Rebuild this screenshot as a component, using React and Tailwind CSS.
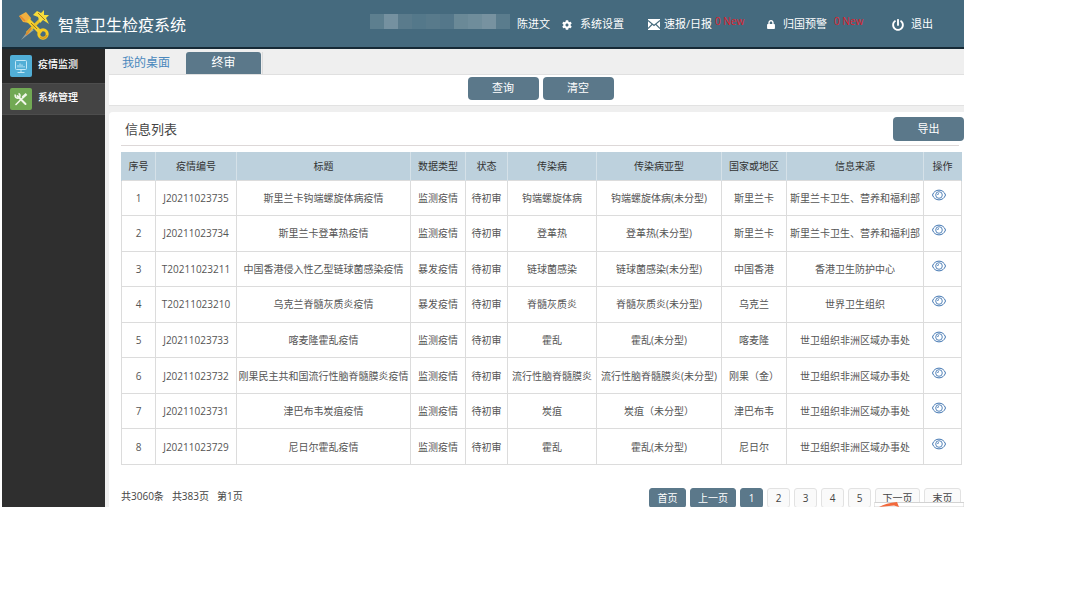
import { useState } from "react";
import { FaCog, FaLock, FaPowerOff } from "react-icons/fa";

const columns = [
  { title: "序号", width: "w-[34px]" },
  { title: "疫情编号", width: "w-[81px]" },
  { title: "标题", width: "w-[174px]" },
  { title: "数据类型", width: "w-[55px]" },
  { title: "状态", width: "w-[42px]" },
  { title: "传染病", width: "w-[89px]" },
  { title: "传染病亚型", width: "w-[125px]" },
  { title: "国家或地区", width: "w-[65px]" },
  { title: "信息来源", width: "w-[137px]" },
  { title: "操作", width: "w-[38px]" },
];

const rows = [
  ["J20211023735", "斯里兰卡钩端螺旋体病疫情", "监测疫情", "待初审", "钩端螺旋体病", "钩端螺旋体病(未分型)", "斯里兰卡", "斯里兰卡卫生、营养和福利部"],
  ["J20211023734", "斯里兰卡登革热疫情", "监测疫情", "待初审", "登革热", "登革热(未分型)", "斯里兰卡", "斯里兰卡卫生、营养和福利部"],
  ["T20211023211", "中国香港侵入性乙型链球菌感染疫情", "暴发疫情", "待初审", "链球菌感染", "链球菌感染(未分型)", "中国香港", "香港卫生防护中心"],
  ["T20211023210", "乌克兰脊髓灰质炎疫情", "暴发疫情", "待初审", "脊髓灰质炎", "脊髓灰质炎(未分型)", "乌克兰", "世界卫生组织"],
  ["J20211023733", "喀麦隆霍乱疫情", "监测疫情", "待初审", "霍乱", "霍乱(未分型)", "喀麦隆", "世卫组织非洲区域办事处"],
  ["J20211023732", "刚果民主共和国流行性脑脊髓膜炎疫情", "监测疫情", "待初审", "流行性脑脊髓膜炎", "流行性脑脊髓膜炎(未分型)", "刚果（金）", "世卫组织非洲区域办事处"],
  ["J20211023731", "津巴布韦炭疽疫情", "监测疫情", "待初审", "炭疽", "炭疽（未分型）", "津巴布韦", "世卫组织非洲区域办事处"],
  ["J20211023729", "尼日尔霍乱疫情", "监测疫情", "待初审", "霍乱", "霍乱(未分型)", "尼日尔", "世卫组织非洲区域办事处"],
];

const Logo = () => (
  <svg viewBox="0 0 34 34" className="w-[34px] h-[34px]" aria-hidden="true">
    <path d="M4 32 L13 20 L17 22 Z" fill="#93a3a3" />
    <path d="M2 8 L9 4 L14 10 L12 15 L6 14 Z" fill="#f0b040" />
    <path d="M3 8 L8 13" stroke="#e8862d" strokeWidth="1.5" />
    <path d="M11 12 L24 25" stroke="#f4cf2c" strokeWidth="4" />
    <path d="M10 25 L24 11" stroke="#e9c42a" strokeWidth="3" />
    <path d="M9 27 L14 20" stroke="#d98a35" strokeWidth="2" />
    <path
      d="M16 7 L20 3 L24 5 L27 2 L27 7 L32 7 L29 10 L32 16 L26 12 L23 15 L21 9 Z"
      fill="#f7dc3b"
    />
    <path d="M21 5 L28 12" stroke="#a8791a" strokeWidth="1" />
    <path d="M14 15 L20 21" stroke="#a8791a" strokeWidth="1" />
    <circle cx="26" cy="26" r="4.2" fill="none" stroke="#f5cc22" strokeWidth="3" />
    <path d="M23 29 A4.2 4.2 0 0 0 30 27" fill="none" stroke="#d99a1f" strokeWidth="1.4" />
  </svg>
);

const MailIcon = () => (
  <svg viewBox="0 0 12 11" className="w-3 h-[11px]" aria-hidden="true">
    <rect width="12" height="11" fill="#fff" />
    <path
      d="M0 1.5 L6 6.5 L12 1.5 M0 9.5 L4 5.5 M12 9.5 L8 5.5"
      fill="none"
      stroke="#456a7c"
      strokeWidth="1.1"
    />
  </svg>
);

const MonitorIcon = () => (
  <svg viewBox="0 0 22 22" className="w-[22px] h-[22px]" aria-hidden="true">
    <rect width="22" height="22" rx="2" fill="#51aed6" />
    <rect x="5.5" y="5.5" width="11" height="9" rx="1" fill="none" stroke="#c3e8f7" />
    <path d="M8 12.5V10M10 12.5V8.5M12 12.5V9.5M14 12.5V11" stroke="#c3e8f7" />
    <path d="M11 15V17M7.5 17.5H14.5" stroke="#c3e8f7" />
  </svg>
);

const ToolsIcon = () => (
  <svg viewBox="0 0 22 22" className="w-[22px] h-[22px]" aria-hidden="true">
    <rect width="22" height="22" rx="2" fill="#71a954" />
    <path d="M7.5 8 L15.5 16" stroke="#f1f7ea" strokeWidth="2" strokeLinecap="round" />
    <path d="M6 16.5 L13 9.5" stroke="#f1f7ea" strokeWidth="1.6" strokeLinecap="round" />
    <path
      d="M5.5 6.5 A2.4 2.4 0 1 0 8.5 5.5"
      fill="none"
      stroke="#f1f7ea"
      strokeWidth="1.6"
    />
    <path d="M12.5 9.5 L16.5 6" stroke="#f1f7ea" strokeWidth="2.4" />
  </svg>
);

const EyeIcon = () => (
  <svg
    viewBox="0 0 14 12"
    className="w-[14px] h-3"
    fill="none"
    stroke="#4377b2"
    aria-hidden="true"
  >
    <path d="M0.5 6 C2.5 -0.5 11.5 -0.5 13.5 6 C11.5 12.5 2.5 12.5 0.5 6 Z" />
    <circle cx="7" cy="6" r="3.3" strokeWidth="0.9" />
    <path d="M5.6 6 A1.4 1.4 0 0 1 7 4.6" strokeWidth="0.9" />
  </svg>
);

const mosaic = [
  "bg-[#5d7f8f]",
  "bg-[#7591a0]",
  "bg-[#5a7b8c]",
  "bg-[#54788a]",
  "bg-[#587a8b]",
  "bg-[#54778a]",
  "bg-[#6a8997]",
  "bg-[#6f8d9b]",
  "bg-[#7792a0]",
  "bg-[#5a7c8d]",
];

const Header = () => (
  <header className="flex items-center h-[49px] pt-[2px] pl-[15px] pr-[31px] bg-[#456a7e] border-b-2 border-[#162a36] text-white text-[11px] whitespace-nowrap">
    <Logo />
    <h1 className="ml-[7px] text-base">智慧卫生检疫系统</h1>
    <div className="flex ml-auto mr-[7px] mb-[6px] w-[140px] h-[15px]">
      {mosaic.map((tone, i) => (
        <span key={i} className={`flex-1 ${tone}`} />
      ))}
    </div>
    <span>陈进文</span>
    <a href="#settings" className="flex items-center gap-2 ml-3">
      <FaCog className="w-[10px] h-[10px]" />
      系统设置
    </a>
    <a href="#reports" className="flex items-center gap-1 ml-6">
      <MailIcon />
      速报/日报
    </a>
    <span className="w-[30px] ml-[3px] mb-[6px] text-[10px] text-[#e0202c]">0 New</span>
    <a href="#alerts" className="flex items-center gap-2 ml-[22px]">
      <FaLock className="w-2 h-[9px]" />
      归国预警
    </a>
    <span className="w-[30px] ml-[7px] mb-[6px] text-[10px] text-[#e0202c]">0 New</span>
    <button type="button" className="flex items-center gap-[7px] ml-7">
      <FaPowerOff className="w-3 h-3" />
      退出
    </button>
  </header>
);

const Sidebar = () => (
  <nav className="w-[103px] shrink-0 bg-[#2f2f2f] text-white text-[10px] font-medium">
    <a href="#monitor" className="flex items-center gap-[6px] h-[34px] pl-2 bg-[#292929]">
      <MonitorIcon />
      <span className="mb-1">疫情监测</span>
    </a>
    <a
      href="#system"
      className="flex items-center gap-[6px] h-8 pl-2 bg-[#444444] border-y border-[#4d4d4d]"
    >
      <ToolsIcon />
      <span className="mb-1">系统管理</span>
    </a>
  </nav>
);

const InfoTable = () => (
  <table className="w-full h-[313px] table-fixed border-collapse text-center text-[10px] leading-4 text-[#555] whitespace-nowrap">
    <thead>
      <tr className="h-7 bg-[#bdd1dd] text-[#333]">
        {columns.map((col) => (
          <th
            key={col.title}
            className={`${col.width} p-0 font-normal border-x border-[#d5e1e8] first:border-l-[#bdd1dd] last:border-r-[#bdd1dd]`}
          >
            {col.title}
          </th>
        ))}
      </tr>
    </thead>
    <tbody>
      {rows.map((row, i) => (
        <tr key={row[0]}>
          <td className="p-0 border border-[#dcdcdc]">{i + 1}</td>
          {row.map((cell, j) => (
            <td key={j} className="p-0 border border-[#dcdcdc]">
              {cell}
            </td>
          ))}
          <td className="p-0 pb-[6px] pr-2 border border-[#dcdcdc]">
            <button type="button" aria-label="查看" className="block mx-auto">
              <EyeIcon />
            </button>
          </td>
        </tr>
      ))}
    </tbody>
  </table>
);

const Pagination = () => {
  const [page, setPage] = useState(1);
  const dark = "bg-[#5b788a] border-[#5b788a] text-white";
  const light = "bg-[#fafafa] border-[#e2e2e2] text-[#444]";
  const base = "h-5 border rounded-[3px]";

  return (
    <div className="flex gap-1 h-[19px] overflow-hidden text-[10px] leading-[18px]">
      <button type="button" onClick={() => setPage(1)} className={`${base} ${dark} w-[37px]`}>
        首页
      </button>
      <button
        type="button"
        onClick={() => setPage(Math.max(1, page - 1))}
        className={`${base} ${dark} w-[46px]`}
      >
        上一页
      </button>
      {[1, 2, 3, 4, 5].map((n) => (
        <button
          key={n}
          type="button"
          onClick={() => setPage(n)}
          className={`${base} w-[23px] ${page === n ? dark : light}`}
        >
          {n}
        </button>
      ))}
      <button
        type="button"
        onClick={() => setPage(page + 1)}
        className={`${base} ${light} w-[45px]`}
      >
        下一页
      </button>
      <button type="button" onClick={() => setPage(383)} className={`${base} ${light} w-[37px]`}>
        末页
      </button>
    </div>
  );
};

const App = () => {
  return (
    <div className="min-h-screen bg-white pl-[2px] pr-[116px] font-['Open_Sans','Noto_Sans_CJK_SC',sans-serif]">
      <Header />
      <div className="flex">
        <Sidebar />
        <main className="flex-1 min-w-0 pl-1 bg-[#efefef]">
          {/* Tabs */}
          <div className="flex items-end h-[26px] border-b border-[#e0e0e0] text-xs">
            <button type="button" className="h-[22px] w-[76px] pr-[2px] text-[#4a88bd]">
              我的桌面
            </button>
            <button
              type="button"
              className="h-[22px] w-[75px] ml-px rounded-t-[3px] bg-[#5b788a] text-white"
            >
              终审
            </button>
            <span className="h-[22px] w-[2px] border-r border-[#dcdcdc]" />
          </div>

          {/* Search actions */}
          <div className="flex justify-center gap-1 h-[31px] pt-[2px] pl-2 bg-white border-b border-[#e2e2e2] text-[11px] text-white">
            <button type="button" className="h-[23px] w-[71px] rounded bg-[#5b788a]">
              查询
            </button>
            <button type="button" className="h-[23px] w-[71px] rounded bg-[#5b788a]">
              清空
            </button>
          </div>

          {/* List */}
          <section className="relative mt-[6px] pt-[5px] pl-[12px] bg-white rounded-tl">
            <div className="flex items-start justify-between h-[28px]">
              <h2 className="pt-[2px] pl-1 text-[13px] leading-5 text-[#444]">信息列表</h2>
              <button
                type="button"
                className="h-6 w-[71px] rounded bg-[#5b788a] text-[11px] text-white"
              >
                导出
              </button>
            </div>
            <div className="mr-[5px] mb-[6px] border-t border-[#ddd8d8]" />
            <div className="mr-[3px]">
              <InfoTable />
              <div className="flex items-start justify-between pt-[23px]">
                <p className="flex gap-2 text-[10px] leading-4 text-[#444]">
                  <span>共3060条</span>
                  <span>共383页</span>
                  <span>第1页</span>
                </p>
                <Pagination />
              </div>
            </div>
            {/* Corner of the floating toolbar */}
            <svg
              viewBox="0 0 90 5"
              className="absolute right-0 bottom-0 w-[90px] h-[5px]"
              aria-hidden="true"
            >
              <path d="M0 5 V1.5 Q0 0.5 1 0.5 H90 V5 Z" fill="#fff" stroke="#d2d2d2" />
              <path d="M5 5 Q12 1 23 0 L25 5 L20 3.5 Z" fill="#f2693c" />
            </svg>
          </section>
        </main>
      </div>
    </div>
  );
};

export default App;
